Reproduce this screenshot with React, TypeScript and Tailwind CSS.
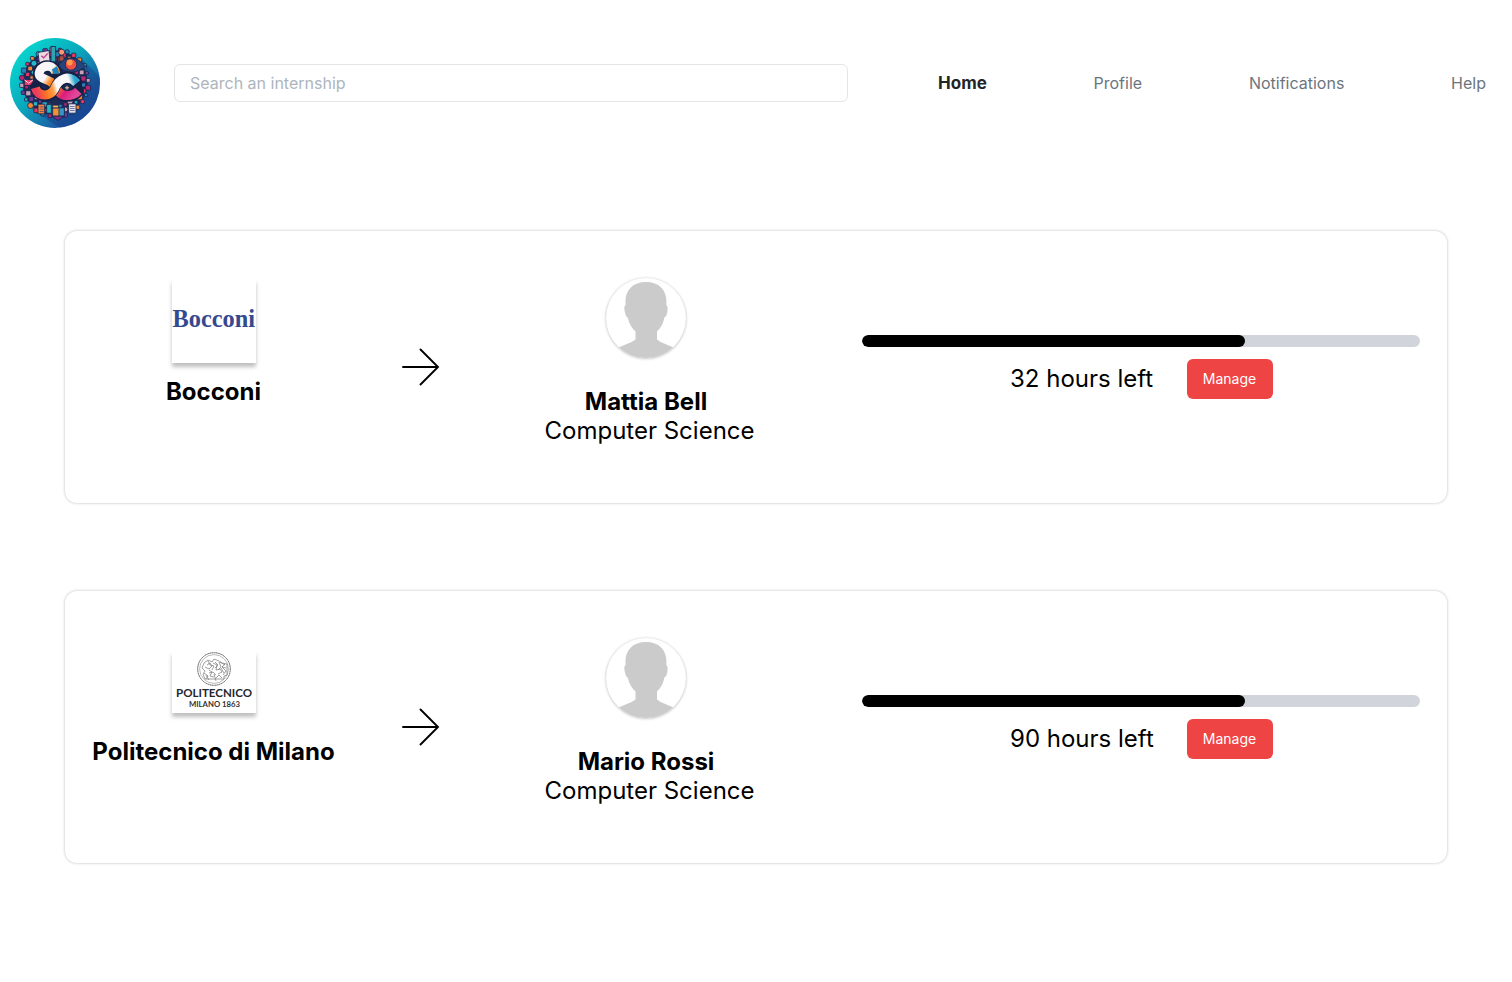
type Internship = {
  company: string;
  student: string;
  course: string;
  hours: number;
  logo: "bocconi" | "polimi";
};

const internships: Internship[] = [
  { company: "Bocconi", student: "Mattia Bell", course: "Computer Science", hours: 32, logo: "bocconi" },
  { company: "Politecnico di Milano", student: "Mario Rossi", course: "Computer Science", hours: 90, logo: "polimi" },
];

const ringColors = ["#e9395f", "#f58634", "#26b6c9", "#6d3f94", "#c9a3b4", "#b82670", "#2780b8"];

function BrandLogo() {
  const dots = Array.from({ length: 84 }, (_, i) => {
    const ring = i % 3;
    const angle = (i / 84) * Math.PI * 2;
    const radius = 72 + ring * 14;
    return { x: 165 + Math.cos(angle) * radius, y: 157 + Math.sin(angle) * radius, c: ringColors[(i * 5 + ring) % 7], s: 7 + ((i * 7) % 5), round: i % 4 === 0 };
  });
  return (
    <svg viewBox="30 22.5 270 270" className="h-[90px] w-[90px] shrink-0">
      <defs>
        <linearGradient id="disc" x1="0" y1="0" x2="1" y2="1">
          <stop offset="0" stopColor="#08e5d5" />
          <stop offset=".45" stopColor="#0aa9bd" />
          <stop offset=".75" stopColor="#1c5aa4" />
          <stop offset="1" stopColor="#17429a" />
        </linearGradient>
        <linearGradient id="downStroke" gradientUnits="userSpaceOnUse" x1="130" y1="125" x2="225" y2="195">
          <stop offset=".12" stopColor="#f7f5f7" />
          <stop offset=".28" stopColor="#ff8a24" />
          <stop offset=".55" stopColor="#fb6a2c" />
          <stop offset=".75" stopColor="#dc1c7c" />
          <stop offset="1" stopColor="#e0489a" />
        </linearGradient>
        <linearGradient id="upStroke" gradientUnits="userSpaceOnUse" x1="109" y1="185" x2="225" y2="150">
          <stop offset="0" stopColor="#ef3b5c" />
          <stop offset=".25" stopColor="#ff7a1f" />
          <stop offset=".42" stopColor="#ffa04a" />
          <stop offset=".52" stopColor="#faf8fa" />
          <stop offset=".85" stopColor="#faf8fa" />
          <stop offset="1" stopColor="#2ba6cf" />
        </linearGradient>
        <clipPath id="discClip"><circle cx="165" cy="157.5" r="135" /></clipPath>
      </defs>
      <circle cx="165" cy="157.5" r="135" fill="url(#disc)" />
      <path clipPath="url(#discClip)" d="M246 86 310 150V300H190L92 232Z" fill="#173b82" opacity=".45" />
      <circle cx="165" cy="157" r="98" fill="#1c2a58" />
      <g stroke="#172551" strokeWidth="2.5">
        {dots.map((d, i) =>
          d.round ? (
            <circle key={i} cx={d.x} cy={d.y} r={d.s * 0.8} fill={d.c} />
          ) : (
            <rect key={i} x={d.x - d.s * 0.7} y={d.y - d.s * 0.7} width={d.s * 1.4} height={d.s * 1.4} rx="2" fill={d.c} />
          ),
        )}
        <path d="M114 66l33-6 3 32-32 5Z" fill="#ead9e2" />
        <path d="M153 48h14v46h-14Z" fill="#30a4ac" />
        <circle cx="185" cy="65" r="9" fill="#ff9870" />
        <path d="M178 76h14v16h-14Z" fill="#a8513f" />
        <path d="M172 108Q211 56 258 108Q215 142 172 108Z" fill="#24447b" />
        <circle cx="213" cy="102" r="17" fill="#ef4f45" />
        <circle cx="209" cy="96" r="9" fill="#ff9b48" stroke="none" />
        <path d="M73 147h26v18H73Z" fill="#ed3767" />
        <path d="m73 148 13 10 13-10" fill="none" stroke="#fff" />
        <path d="M114 221h20v29h-20Z" fill="#f4823d" />
        <path d="M140 222h14v26h-14Z" fill="#29b8c3" />
        <path d="M158 232h35v25h-35Z" fill="#f39235" />
        <path d="M158 232v-8h18v8Z" fill="#f7bf57" />
        <path d="M177 232h16v25h-16Z" fill="#3596c8" />
        <path d="M155 257h38l-19 13Z" fill="#7b2c83" />
        <path d="M206 220h22v28h-22Z" fill="#e8e5ed" />
        <path d="M244 175h14v13h-14Z" fill="#ec315d" />
      </g>
      <path d="m124 76 7 6 12-13" fill="none" stroke="#c43d87" strokeWidth="4" />
      <path d="M210 228h14m-14 6h14m-14 6h14M119 229h12m-12 7h12m-12 7h12" stroke="#32416d" strokeWidth="2" />
      <g fill="none" strokeLinejoin="round">
        <path d="M167 127C165 105 128 102 119 122C111 144 137 144 155 156C172 168 172 195 200 195Q222 195 233 181M108 172C116 200 150 200 163 176C175 144 207 130 228 156" stroke="#152045" strokeWidth="38" strokeLinecap="round" />
        <path d="M167 129C165 103 128 100 119 122C111 144 137 144 155 156C172 168 172 195 200 195Q222 195 235 181" stroke="url(#downStroke)" strokeWidth="27" />
        <path d="M106 172C114 200 150 200 163 176C175 144 207 130 230 158" stroke="#152045" strokeWidth="31" />
        <path d="M106 172C114 200 150 200 163 176C175 144 207 130 230 158" stroke="url(#upStroke)" strokeWidth="27" />
        <path d="M163 112Q167 118 168 130" stroke="#1b83bd" strokeWidth="18" />
      </g>
      <path d="M201 166v12m-6-6h12" stroke="#f3d18d" strokeWidth="3" />
    </svg>
  );
}

function Header() {
  return (
    <header className="flex h-[165px] items-center pl-[10px] text-[16px] leading-6 text-[#6c757d]">
      <BrandLogo />
      <input
        placeholder="Search an internship"
        className="ml-[74px] h-[38px] w-[674px] shrink-0 rounded-md border border-[#e4e5e9] px-[15px] outline-none placeholder:text-[#adb5bd]"
      />
      <nav className="ml-[90px] flex w-[548px] justify-between whitespace-nowrap">
        <a className="text-[17px] font-bold text-[#212529]">Home</a>
        <a>Profile</a>
        <a>Notifications</a>
        <a>Help</a>
      </nav>
    </header>
  );
}

function BocconiLogo() {
  return (
    <svg viewBox="0 0 84 84" className="h-[84px] w-[84px] bg-white shadow-[0_4px_4px_rgba(0,0,0,0.25)]">
      <text x="0.5" y="47.5" textLength="82.5" lengthAdjust="spacingAndGlyphs" fontFamily="Liberation Serif, serif" fontWeight="700" fontSize="25" fill="#35498f">
        Bocconi
      </text>
    </svg>
  );
}

function PolimiLogo() {
  return (
    <svg viewBox="0 0 84 62" className="mb-[10px] h-[62px] w-[84px] bg-white shadow-[0_4px_4px_rgba(0,0,0,0.25)]">
      <g fill="none" stroke="#777">
        <circle cx="42" cy="18" r="16.3" strokeWidth="1" stroke="#555" strokeDasharray="1.5 .4" />
        <circle cx="42" cy="18" r="14.4" strokeWidth=".5" />
        <path strokeWidth=".7" d="M32 12l4-3 4 2 2-3 5 2 3 2 5 1v11l-3 1v3H33l-2-5 2-3-3-3 2-5m3 2 3-2 2 3-3 3-4-2m8-4 4 2-1 5 4-1 2 3-4 2m-9-4 3 2-2 4 4 1m-10-4 4 3-2 3m10-1 3-3 3 3m3-14-3 3 4 4-3 4m-8-13 3 3-3 3m-9 7 3 5m5-6 2 7m4-19 5 3m-4 3 3 5M36 10l2 4 4 1-2 4m7-8 2 5-3 3m-9 3 4-1 3 3m6-8 4 1" />
      </g>
      <text x="4" y="46" textLength="76" lengthAdjust="spacingAndGlyphs" fontFamily="Lato, sans-serif" fontWeight="700" fontSize="12" fill="#25272b">POLITECNICO</text>
      <text x="17" y="56" textLength="51" lengthAdjust="spacingAndGlyphs" fontFamily="Lato, sans-serif" fontWeight="700" fontSize="7" fill="#333">MILANO 1863</text>
    </svg>
  );
}

function Avatar() {
  return (
    <div className="h-20 w-20 overflow-hidden rounded-full bg-white shadow-[0_0.5px_3px_rgba(0,0,0,0.3)]">
      <svg viewBox="0 0 80 80" className="h-20 w-20">
        <path fill="#cbcbcb" d="M40 4C27 4 19.5 12 19.5 23v4.5c-1.5 0-1.3 3-.7 6 .7 3.5 1.7 6 3.2 6.5C23 46 26.5 50.5 29.5 53.5v8C25 65 17 67 10 71V80H70V71C63 67 55 65 51 61.5v-8C55 50 57.5 45 58.3 39.5c1.6-.5 2.7-3 3.1-6 .4-3 .4-6-1-6V23C60.4 12 53 4 40 4Z" />
      </svg>
    </div>
  );
}

function InternshipCard({ item }: { item: Internship }) {
  return (
    <article className="flex h-[272px] rounded-xl bg-white text-2xl whitespace-nowrap text-black shadow-[0_0_3px_rgba(0,0,0,0.28)]">
      <div className="flex w-[297px] flex-col items-center">
        <div className="flex h-[132px] items-end">{item.logo === "bocconi" ? <BocconiLogo /> : <PolimiLogo />}</div>
        <h2 className="mt-[13px] font-bold leading-8">{item.company}</h2>
      </div>
      <div className="flex w-[118px] items-center justify-center">
        <svg viewBox="0 0 38 38" className="h-[38px] w-[38px]" fill="none" stroke="#000" strokeWidth="1.9" strokeLinecap="round">
          <path d="M1 19h35M18.5 1.5 36 19 18.5 36.5" />
        </svg>
      </div>
      <div className="flex w-[332px] flex-col items-center pt-[47px]">
        <Avatar />
        <h2 className="mt-[29px] font-bold leading-[29px]">{item.student}</h2>
        <p className="pl-[7px] leading-[29px]">{item.course}</p>
      </div>
      <div className="ml-[50px] flex w-[558px] flex-col pt-[104px]">
        <div className="h-[12px] overflow-hidden rounded-full bg-[#d1d5db]">
          <div className="h-full w-[383px] rounded-full bg-black" />
        </div>
        <div className="mt-[11.5px] flex items-center pl-[148px]">
          <p className="w-[176.5px]">{item.hours} hours left</p>
          <button className="h-10 w-[86px] rounded-md bg-[#ef4444] text-sm text-white">Manage</button>
        </div>
      </div>
    </article>
  );
}

export default function App() {
  return (
    <div className="min-h-[982px] w-[1512px] bg-white font-[Inter,sans-serif]">
      <Header />
      <main className="flex flex-col gap-[88px] px-[65px] pt-[66px]">
        {internships.map((item) => (
          <InternshipCard key={item.company} item={item} />
        ))}
      </main>
    </div>
  );
}
